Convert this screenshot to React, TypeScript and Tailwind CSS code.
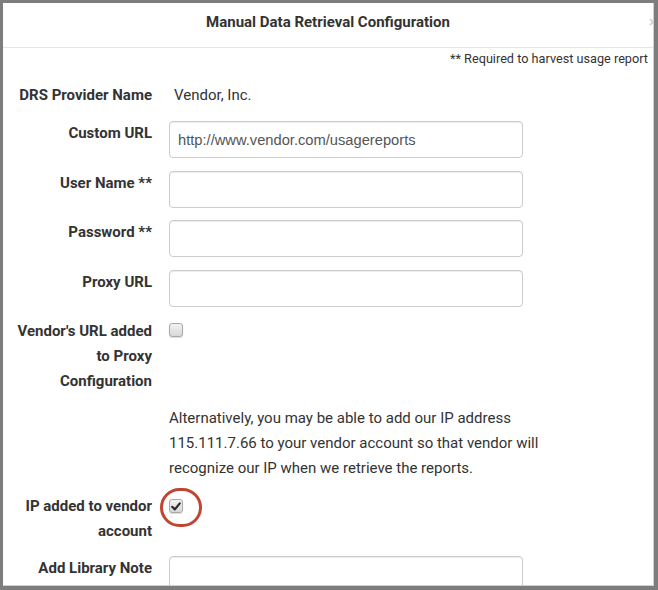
import React from "react";

const labelCls =
  "w-[149px] shrink-0 text-right font-bold text-[15px] leading-[25px] text-[#333]";

function Field({ label, value }: { label: string; value?: string }) {
  return (
    <div className="flex items-start">
      <div className={labelCls}>{label}</div>
      <div className="ml-[17px] flex h-[37px] w-[354px] items-center rounded-[4px] border border-[#ccc] bg-white px-[8px] pt-[1px] text-[14.7px] text-[#555] shadow-[inset_0_1px_1px_rgba(0,0,0,0.075)] [font-family:'Liberation_Sans',Arial,sans-serif]">
        {value}
      </div>
    </div>
  );
}

function Checkbox({ checked }: { checked?: boolean }) {
  return (
    <div className="flex h-[14px] w-[14px] items-center justify-center rounded-[3px] border border-[#a8a8a8] bg-gradient-to-b from-[#f1f1f1] to-[#d8d8d8] shadow-[0_1px_1px_rgba(0,0,0,0.15)]">
      {checked && (
        <svg width="10" height="9" viewBox="0 0 10 9">
          <path
            d="M1.2 4.8 L3.8 7.4 L8.8 1.4"
            fill="none"
            stroke="#2b2b2b"
            strokeWidth="2.2"
            strokeLinecap="round"
            strokeLinejoin="round"
          />
        </svg>
      )}
    </div>
  );
}

export default function App() {
  return (
    <div className="h-[590px] w-[658px] bg-[#7d7d7d] pb-[4px] pl-[3px] pr-[4px] pt-[3px] [font-family:Roboto,'Liberation_Sans',sans-serif]">
      <div className="relative h-full w-full overflow-hidden border-b border-r border-[#d0d0d0] bg-white">
        <div className="flex h-[45px] items-center justify-center border-b border-[#e5e5e5] pb-[6px]">
          <h4 className="text-[15px] font-bold text-[#333]">
            Manual Data Retrieval Configuration
          </h4>
          <svg
            className="absolute right-[-4px] top-[15px]"
            width="8"
            height="8"
            viewBox="0 0 8 8"
          >
            <path d="M1 1 L7 7 M7 1 L1 7" stroke="#cfcfcf" strokeWidth="1.6" />
          </svg>
        </div>

        <div className="mt-[1.5px] pr-[5px] text-right text-[12.7px] leading-[17px] text-[#333]">
          ** Required to harvest usage report
        </div>

        <div className="mt-[16px] flex items-start">
          <div className={labelCls}>DRS Provider Name</div>
          <div className="ml-[22px] text-[15px] leading-[25px] text-[#333]">
            Vendor, Inc.
          </div>
        </div>

        <div className="mt-[13.5px] flex flex-col gap-[12.5px]">
          <Field label="Custom URL" value="http://www.vendor.com/usagereports" />
          <Field label="User Name **" />
          <Field label="Password **" />
          <Field label="Proxy URL" />
        </div>

        <div className="mt-[12px] flex items-start">
          <div className={labelCls}>
            Vendor's URL added
            <br />
            to Proxy
            <br />
            Configuration
          </div>
          <div className="ml-[17px] mt-[4.5px]">
            <Checkbox />
          </div>
        </div>

        <p className="ml-[166px] mt-[12px] whitespace-nowrap text-[15px] leading-[25px] text-[#333]">
          Alternatively, you may be able to add our IP address
          <br />
          115.111.7.66 to your vendor account so that vendor will
          <br />
          recognize our IP when we retrieve the reports.
        </p>

        <div className="mt-[13.5px] flex items-start">
          <div className={labelCls}>
            IP added to vendor
            <br />
            account
          </div>
          <div className="relative ml-[17px] mt-[5px]">
            <Checkbox checked />
            <div className="absolute left-[-9px] top-[-11px] h-[39px] w-[42px] rounded-full border-[3px] border-[#bf4630]" />
          </div>
        </div>

        <div className="mt-[12px]">
          <Field label="Add Library Note" />
        </div>
      </div>
    </div>
  );
}
